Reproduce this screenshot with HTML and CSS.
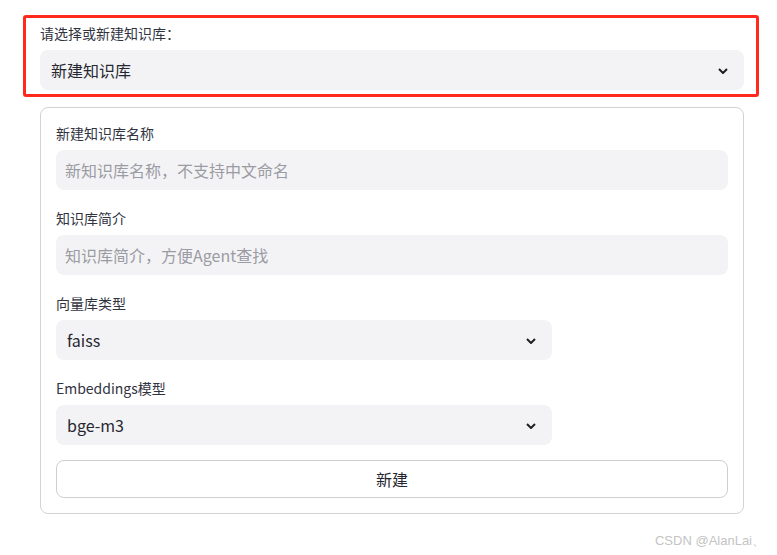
FILE: index.html
```html
<!DOCTYPE html>
<html lang="zh">
<head>
<meta charset="utf-8">
<title>知识库</title>
<link rel="stylesheet" href="styles.css">
</head>
<body>
<div class="page">
  <div class="highlight">
    <div class="label">请选择或新建知识库：</div>
    <div class="select wide">
      <span class="value">新建知识库</span>
      <svg class="chev" viewBox="0 0 10 6" width="10" height="6"><path d="M1 1 L5 5 L9 1" fill="none" stroke="#1f1f1f" stroke-width="2"/></svg>
    </div>
  </div>

  <div class="card">
    <div class="fields">
      <div class="field">
        <div class="label">新建知识库名称</div>
        <div class="input"><span class="placeholder">新知识库名称，不支持中文命名</span></div>
      </div>
      <div class="field">
        <div class="label">知识库简介</div>
        <div class="input"><span class="placeholder">知识库简介，方便Agent查找</span></div>
      </div>
      <div class="field">
        <div class="label">向量库类型</div>
        <div class="select half">
          <span class="value">faiss</span>
          <svg class="chev" viewBox="0 0 10 6" width="10" height="6"><path d="M1 1 L5 5 L9 1" fill="none" stroke="#1f1f1f" stroke-width="2"/></svg>
        </div>
      </div>
      <div class="field">
        <div class="label">Embeddings模型</div>
        <div class="select half">
          <span class="value">bge-m3</span>
          <svg class="chev" viewBox="0 0 10 6" width="10" height="6"><path d="M1 1 L5 5 L9 1" fill="none" stroke="#1f1f1f" stroke-width="2"/></svg>
        </div>
      </div>
    </div>
    <button class="btn">新建</button>
  </div>

  <div class="watermark">CSDN @AlanLai、</div>
</div>
</body>
</html>
```

FILE: styles.css
```css
* { box-sizing: border-box; }
html, body { margin: 0; padding: 0; background: #fff; }
body {
  font-family: "Noto Sans CJK SC", "Noto Sans", sans-serif;
  color: #262730;
  width: 777px;
  height: 555px;
  overflow: hidden;
}
.page {
  padding-top: 15px;
  position: relative;
  height: 555px;
}
.highlight {
  margin-left: 23px;
  width: 736px;
  height: 82px;
  border: 3px solid #ff2a1c;
  border-radius: 3px;
  padding: 5px 11px 0 14px;
}
.label {
  font-size: 14px;
  line-height: 20px;
  height: 20px;
  color: #31333f;
  margin-bottom: 7px;
}
.select, .input {
  height: 40px;
  background: #f3f3f5;
  border-radius: 8px;
  display: flex;
  align-items: center;
  padding: 0 12px 0 11px;
  font-size: 16px;
}
.select { justify-content: space-between; }
.select .value { color: #262730; }
.select .chev { margin-right: 4px; margin-top: 1px; }
.wide { width: 704px; }
.half { width: 496px; }
.input { padding-left: 9px; }
.placeholder { color: #9b9ba3; }

.card {
  margin: 10px 0 0 40px;
  width: 704px;
  height: 407px;
  border: 1px solid #d3d3d6;
  border-radius: 8px;
  padding: 15px 15px 0 15px;
}
.fields {
  display: flex;
  flex-direction: column;
  gap: 18px;
}
.field .label { margin-bottom: 7px; }
.btn {
  display: block;
  width: 672px;
  height: 38px;
  margin-top: 15px;
  background: #fff;
  border: 1px solid #cfcfd3;
  border-radius: 8px;
  font-family: "Noto Sans CJK SC", "Noto Sans", sans-serif;
  font-size: 16px;
  color: #262730;
  padding: 0;
}
.watermark {
  position: absolute;
  right: 12px;
  top: 532px;
  font-family: "Liberation Sans", sans-serif;
  font-size: 13px;
  color: #c4c4c4;
  line-height: 18px;
}
```
